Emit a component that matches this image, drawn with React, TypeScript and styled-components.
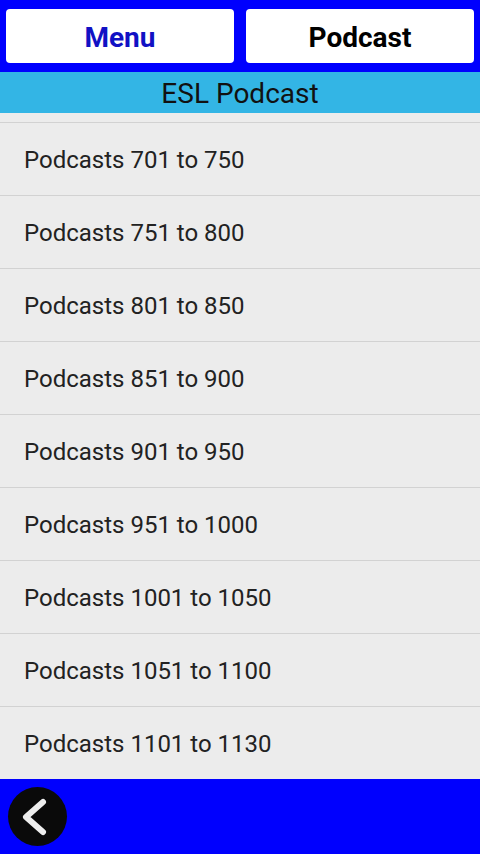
import React from "react"
import styled, { createGlobalStyle } from "styled-components"

const BLUE = "#0000fe"
const HOLO = "#33b5e5"
const LIST_BG = "#ececec"
const SEPARATOR = "#d2d2d2"

const GlobalStyle = createGlobalStyle`
  html, body, #root {
    margin: 0;
    padding: 0;
    height: 100%;
  }
  body {
    font-family: Roboto, "Liberation Sans", sans-serif;
    background: ${LIST_BG};
  }
`

const Screen = styled.div`
  display: flex;
  flex-direction: column;
  height: 100vh;
  overflow: hidden;
`

const TopBar = styled.div`
  display: flex;
  gap: 12px;
  height: 72px;
  padding: 9px 6px;
  box-sizing: border-box;
  background: ${BLUE};
`

const TabButton = styled.button<{ $active?: boolean }>`
  flex: 1;
  display: flex;
  align-items: center;
  justify-content: center;
  border: none;
  border-radius: 4px;
  background: #fff;
  font-family: Roboto, "Liberation Sans", sans-serif;
  font-weight: 700;
  font-size: 28px;
  padding: 3px 0 0;
  color: ${p => (p.$active ? "#1111c4" : "#000")};
`

const TitleBar = styled.div`
  height: 41px;
  display: flex;
  align-items: center;
  justify-content: center;
  background: ${HOLO};
  color: #111;
  font-size: 28px;
  padding-top: 1px;
  box-sizing: border-box;
`

const List = styled.div`
  flex: 1;
  overflow: hidden;
  padding-top: 9px;
  background: ${LIST_BG};
`

const Row = styled.div`
  height: 73px;
  box-sizing: border-box;
  display: flex;
  align-items: center;
  padding: 2px 24px 0;
  border-top: 1px solid ${SEPARATOR};
  font-size: 24px;
  color: #222;
`

const BottomBar = styled.div`
  height: 75px;
  display: flex;
  align-items: center;
  padding-left: 8px;
  background: ${BLUE};
`

const BackButton = styled.button`
  width: 59px;
  height: 59px;
  border-radius: 50%;
  border: none;
  padding: 0;
  background: #0a0a0a;
  display: flex;
  align-items: center;
  justify-content: center;
`

const ranges: [number, number][] = []
for (let start = 701; start <= 1101; start += 50) {
  ranges.push([start, Math.min(start + 49, 1130)])
}

export default function App() {
  return (
    <Screen>
      <GlobalStyle />
      <TopBar>
        <TabButton $active>Menu</TabButton>
        <TabButton>Podcast</TabButton>
      </TopBar>
      <TitleBar>ESL Podcast</TitleBar>
      <List>
        {ranges.map(([a, b]) => (
          <Row key={a}>Podcasts {a} to {b}</Row>
        ))}
      </List>
      <BottomBar>
        <BackButton aria-label="Back">
          <svg width="59" height="59" viewBox="0 0 59 59">
            <path
              d="M35 15 L18 30 L35 45"
              fill="none"
              stroke="#eee"
              strokeWidth="6"
              strokeLinecap="round"
              strokeLinejoin="round"
            />
          </svg>
        </BackButton>
      </BottomBar>
    </Screen>
  )
}
